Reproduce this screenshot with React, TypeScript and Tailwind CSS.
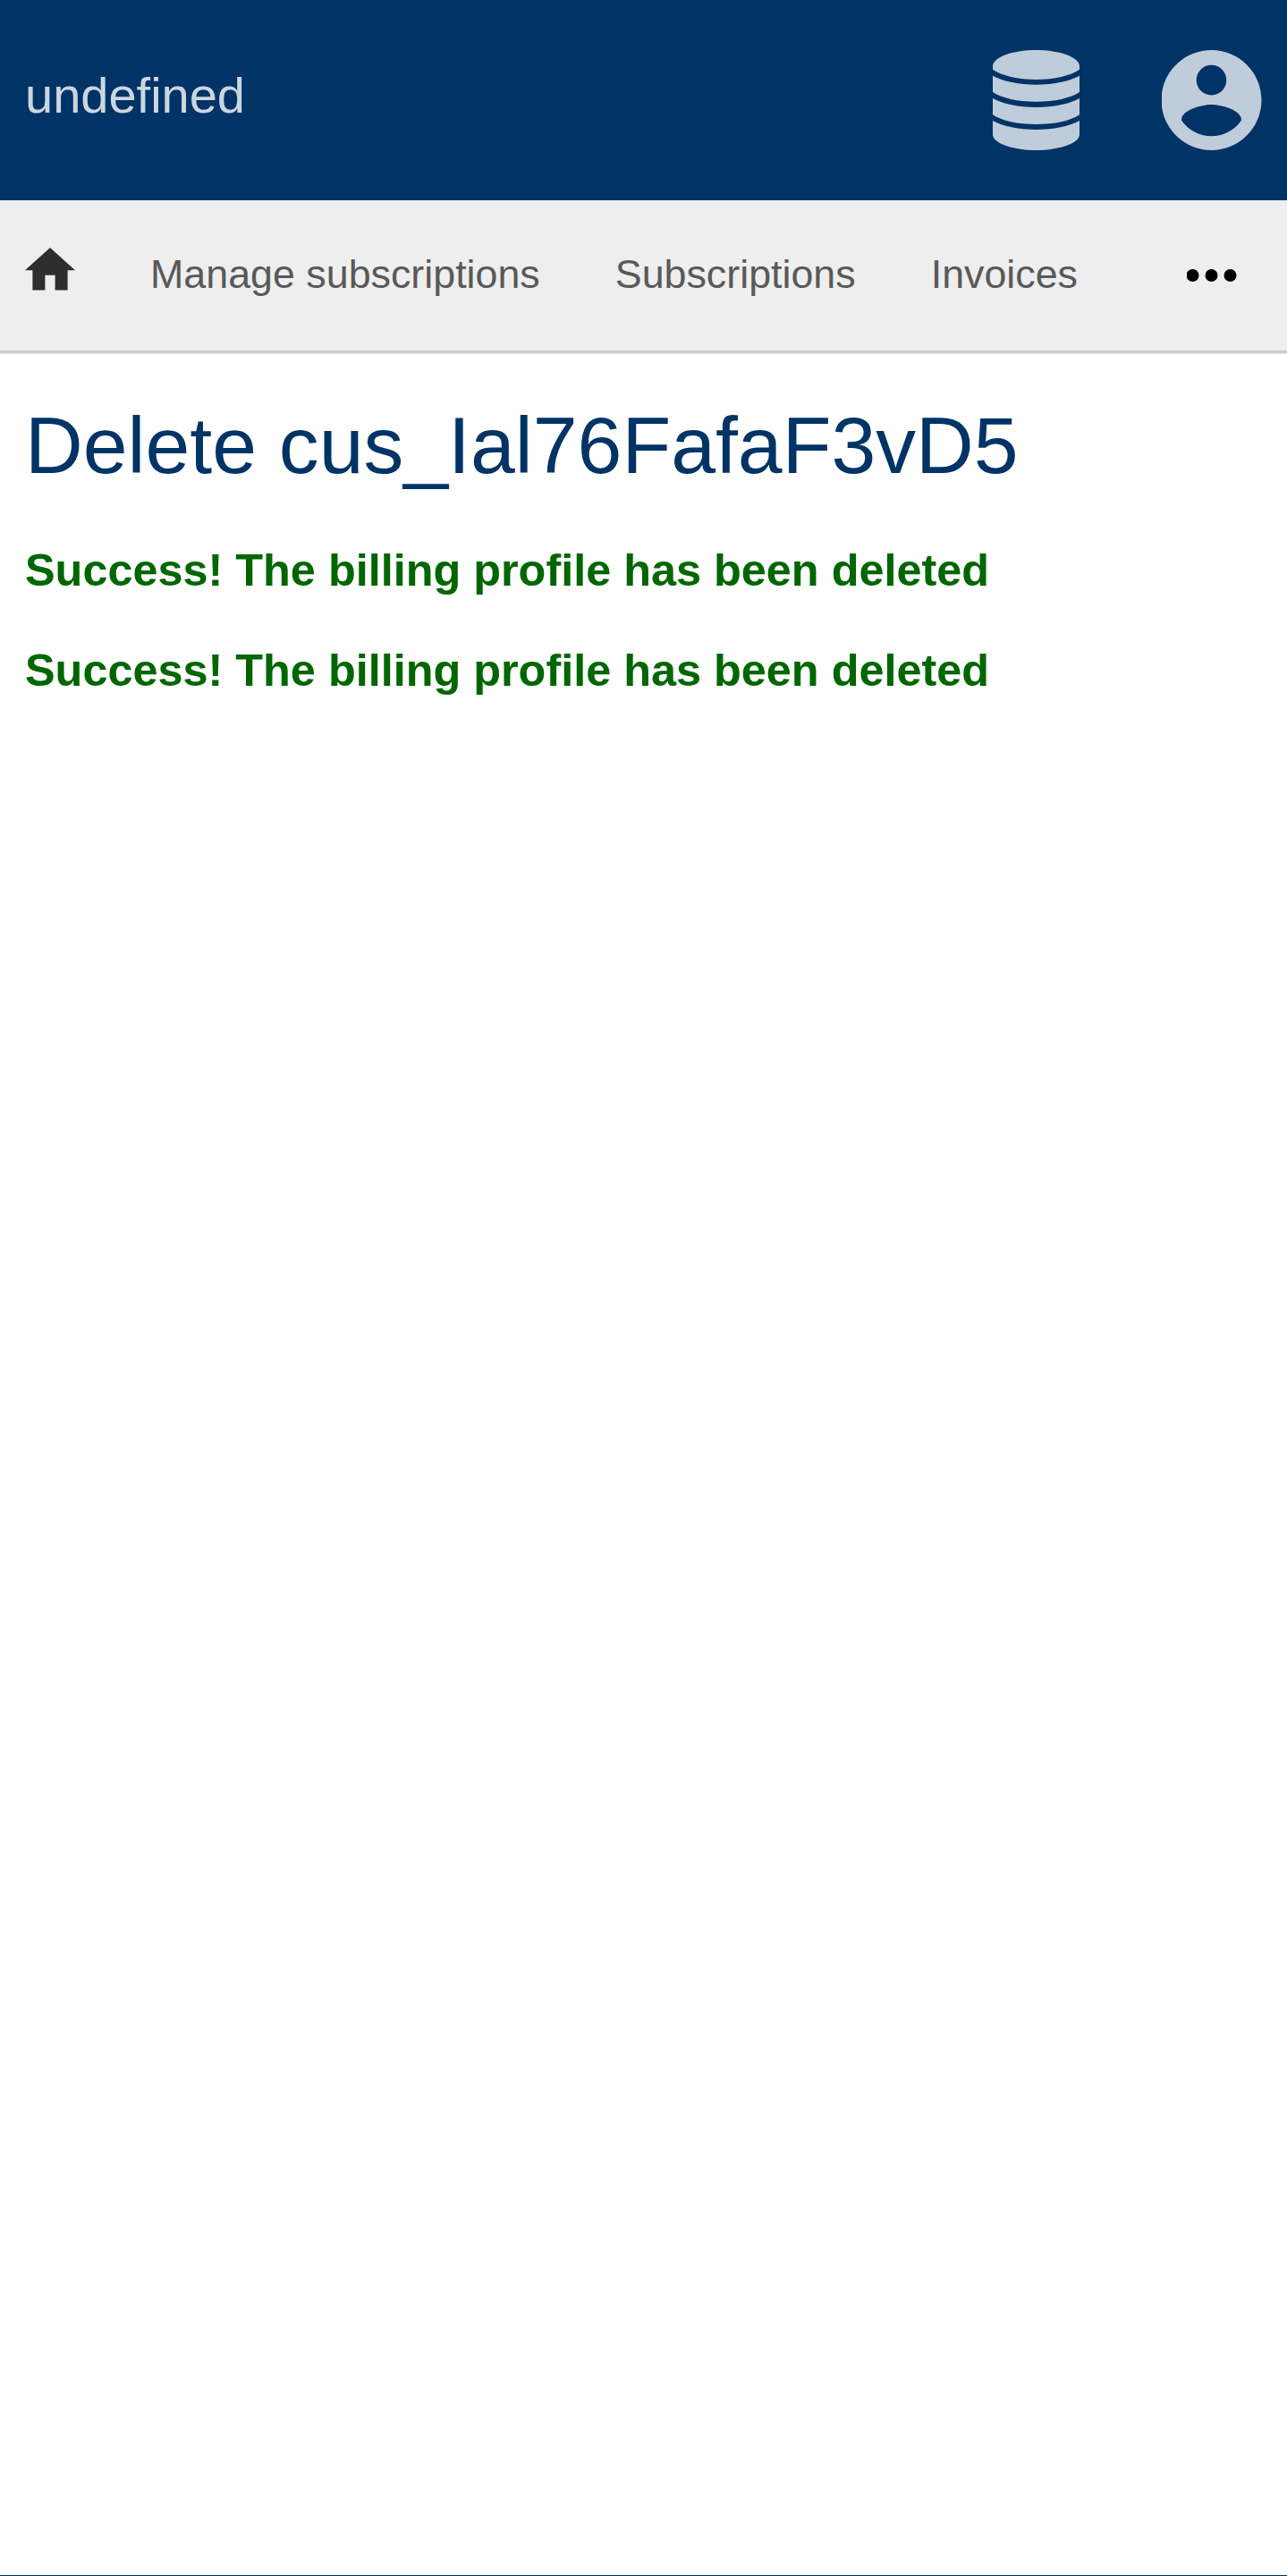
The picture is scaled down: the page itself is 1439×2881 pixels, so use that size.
import React from "react";

const DatabaseIcon = () => (
  <svg className="h-[112px] w-[97px]" viewBox="0 0 97 112" fill="currentColor">
    <path d="M0 18C0 8 22 0 48.500 0S97 8 97 18V21.700C87 28.500 69 33 48.500 33S10 28.500 0 21.700Z" />
    <path d="M0 28.700C12 35 29 38.700 48.500 38.700S85 35 97 28.700V47C87 53.700 69 57.800 48.500 57.800S10 53.700 0 47Z" />
    <path d="M0 54C12 60.300 29 64 48.500 64S85 60.300 97 54V72.200C87 79 69 83 48.500 83S10 79 0 72.200Z" />
    <path d="M0 79C12 85.300 29 89 48.500 89S85 85.300 97 79V94.500C97 104 75 112 48.500 112S0 104 0 94.500Z" />
  </svg>
);

const AccountIcon = () => (
  <svg className="h-[112px] w-[112px]" viewBox="2.090 2 20 20" fill="currentColor">
    <path d="M12 2C6.480 2 2 6.480 2 12s4.480 10 10 10 10-4.480 10-10S17.520 2 12 2zm0 3c1.660 0 3 1.340 3 3s-1.340 3-3 3-3-1.340-3-3 1.340-3 3-3zm0 14.200c-2.500 0-4.710-1.280-6-3.220.030-1.990 4-3.080 6-3.080 1.990 0 5.970 1.090 6 3.080-1.290 1.940-3.500 3.220-6 3.220z" />
  </svg>
);

const HomeIcon = () => (
  <svg className="mt-[53.200px] h-[47.600px] w-14 shrink-0 text-[#2e2e2e]" viewBox="2 3 20 17" fill="currentColor">
    <path d="M10 20v-6h4v6h5v-8h3L12 3 2 12h3v8z" />
  </svg>
);

const MoreIcon = () => (
  <svg className="mt-[77px] mr-14 ml-auto h-[14px] w-14 text-black" viewBox="0.500 0 56 14" fill="currentColor">
    <circle cx="7" cy="7" r="7" />
    <circle cx="28" cy="7" r="7" />
    <circle cx="49" cy="7" r="7" />
  </svg>
);

const links = ["Manage subscriptions", "Subscriptions", "Invoices"];
const messages = [
  "Success! The billing profile has been deleted",
  "Success! The billing profile has been deleted",
];

export default function App() {
  return (
    <div className="flex h-[2881px] w-full flex-col overflow-hidden border-b border-[#003366] bg-white font-['Liberation_Sans',Arial,sans-serif]">
      <header className="flex h-[224px] shrink-0 items-center justify-between bg-[#003366] px-7">
        <div className="pb-[11px] text-[56px] leading-[63px] text-[#ccd6e0]">undefined</div>
        <div className="flex items-center gap-[92px] text-[#bfccd9]">
          <DatabaseIcon />
          <AccountIcon />
        </div>
      </header>
      <nav className="flex h-[168px] shrink-0 items-start bg-[#eeeeee] pl-7">
        <HomeIcon />
        {links.map((label) => (
          <a key={label} className="mt-[57px] ml-[84px] text-[44.800px] leading-[50px] whitespace-nowrap text-[#595959]">
            {label}
          </a>
        ))}
        <MoreIcon />
      </nav>
      <div className="h-[3px] shrink-0 bg-[#cccccc]" />
      <div className="h-px shrink-0 bg-[#e6e6e6]" />
      <main className="px-7 pt-[50px]">
        <h1 className="text-[89.600px] leading-[104px] text-[#003366]">Delete cus_Ial76FafaF3vD5</h1>
        <div className="mt-[59px] flex flex-col gap-[55px]">
          {messages.map((text, i) => (
            <p key={i} className="text-[50.400px] leading-[57px] font-bold text-[#006600]">
              {text}
            </p>
          ))}
        </div>
      </main>
    </div>
  );
}
